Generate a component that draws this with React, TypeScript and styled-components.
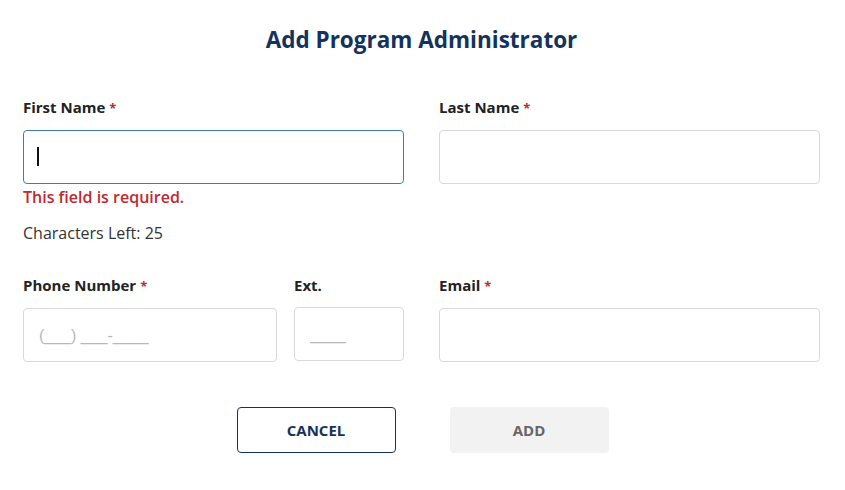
import styled, { createGlobalStyle } from "styled-components";

const GlobalStyle = createGlobalStyle`
  body {
    margin: 0;
    background: #ffffff;
    font-family: "Open Sans", "Liberation Sans", sans-serif;
  }
  * { box-sizing: border-box; }
`

const Page = styled.div`
  width: 845px;
  padding: 25px 25px 0 23px;
`

const Title = styled.h1`
  margin: 0;
  text-align: center;
  font-size: 22.5px;
  line-height: 30px;
  font-weight: 700;
  color: #13325c;
`

const FormGrid = styled.div`
  display: grid;
  grid-template-columns: 1fr 1fr;
  column-gap: 35px;
  margin-top: 43px;
`

const Field = styled.div`
  display: flex;
  flex-direction: column;
`

const SplitField = styled.div`
  display: flex;
  gap: 17px;
`

const Label = styled.label`
  font-size: 15px;
  line-height: 18px;
  font-weight: 700;
  color: #222222;
  margin-bottom: 13px;
`

const Star = styled.span`
  color: #c0282f;
  margin-left: 4px;
  font-size: 13px;
`

interface InputProps {
  $focused?: boolean
}

const TextInput = styled.input<InputProps>`
  all: unset;
  box-sizing: border-box;
  width: 100%;
  height: 54px;
  padding: 0 15px;
  border-radius: 4px;
  border: ${(p) => (p.$focused ? "1.5px solid #3f7fa3" : "1.5px solid #d9d9d9")};
  font-family: "Open Sans", "Liberation Sans", sans-serif;
  font-size: 15px;
  color: #222;
  background: #fff;
  &::placeholder {
    font-family: "Liberation Sans", Arial, sans-serif;
    font-size: 16px;
    color: #b8b8b8;
  }
`

const Caret = styled.div`
  position: absolute;
  left: 14px;
  top: 17px;
  width: 1.5px;
  height: 19px;
  background: #111;
`

const InputWrap = styled.div`
  position: relative;
`

const ErrorText = styled.div`
  margin-top: 3px;
  font-size: 16px;
  line-height: 20px;
  font-weight: 600;
  color: #c0282f;
`

const Hint = styled.div`
  margin-top: 16px;
  font-size: 16px;
  line-height: 20px;
  color: #333333;
`

const Spacer = styled.div`
  grid-column: 1 / -1;
  height: 33px;
`

const Buttons = styled.div`
  display: flex;
  justify-content: center;
  gap: 54px;
  margin-top: 45px;
  padding-left: 2px;
`

interface BtnProps {
  $variant: "outline" | "disabled"
}

const Button = styled.button<BtnProps>`
  all: unset;
  box-sizing: border-box;
  width: 159px;
  height: 46px;
  display: flex;
  align-items: center;
  justify-content: center;
  border-radius: 4px;
  font-family: "Open Sans", "Liberation Sans", sans-serif;
  font-size: 15px;
  font-weight: 700;
  border: ${(p) => (p.$variant === "outline" ? "1.5px solid #13325c" : "none")};
  background: ${(p) => (p.$variant === "outline" ? "#fff" : "#f2f2f2")};
  color: ${(p) => (p.$variant === "outline" ? "#13325c" : "#666")};
`

const App = () => {
  return (
    <>
      <GlobalStyle />
      <Page>
        <Title>Add Program Administrator</Title>
        <FormGrid>
          <Field>
            <Label htmlFor="first">First Name<Star>*</Star></Label>
            <InputWrap>
              <TextInput id="first" $focused />
              <Caret />
            </InputWrap>
            <ErrorText>This field is required.</ErrorText>
            <Hint>Characters Left: 25</Hint>
          </Field>
          <Field>
            <Label htmlFor="last">Last Name<Star>*</Star></Label>
            <TextInput id="last" />
          </Field>
          <Spacer />
          <SplitField>
            <Field style={{ width: 254 }}>
              <Label htmlFor="phone">Phone Number<Star>*</Star></Label>
              <TextInput id="phone" placeholder="(___) ___-____" />
            </Field>
            <Field style={{ flex: 1 }}>
              <Label htmlFor="ext">Ext.</Label>
              <TextInput id="ext" placeholder="____" />
            </Field>
          </SplitField>
          <Field>
            <Label htmlFor="email">Email<Star>*</Star></Label>
            <TextInput id="email" />
          </Field>
        </FormGrid>
        <Buttons>
          <Button $variant="outline">CANCEL</Button>
          <Button $variant="disabled">ADD</Button>
        </Buttons>
      </Page>
    </>
  );
}

export default App;
